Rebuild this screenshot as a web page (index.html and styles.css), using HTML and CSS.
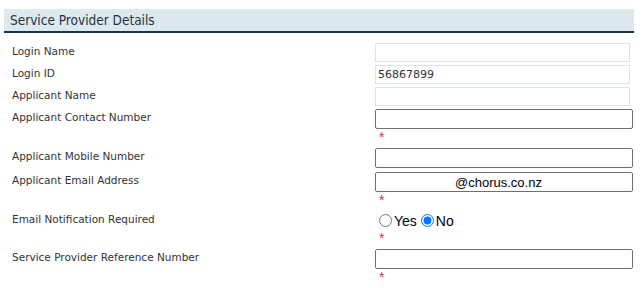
FILE: index.html
```html
<!DOCTYPE html>
<html lang="en">
<head>
    <meta charset="UTF-8">
    <meta name="viewport" content="width=device-width, initial-scale=1.0">
    <title>Service Provider Details</title>
    <link rel="stylesheet" href="styles.css">
</head>
<body>

<div class="panel">
    <h2 class="panel-title">Service Provider Details</h2>

    <form class="details-form">
        <div class="row">
            <label for="loginName">Login Name</label>
            <div class="field"><input type="text" id="loginName" class="readonly" readonly></div>
        </div>
        <div class="row">
            <label for="loginId">Login ID</label>
            <div class="field"><input type="text" id="loginId" class="readonly" value="56867899" readonly></div>
        </div>
        <div class="row">
            <label for="applicantName">Applicant Name</label>
            <div class="field"><input type="text" id="applicantName" class="readonly" readonly></div>
        </div>
        <div class="row required">
            <label for="contactNumber">Applicant Contact Number</label>
            <div class="field">
                <input type="text" id="contactNumber">
                <span class="req">*</span>
            </div>
        </div>
        <div class="row plain">
            <label for="mobileNumber">Applicant Mobile Number</label>
            <div class="field"><input type="text" id="mobileNumber"></div>
        </div>
        <div class="row required">
            <label for="email">Applicant Email Address</label>
            <div class="field">
                <input type="text" id="email" class="email-input" value="@chorus.co.nz">
                <span class="req">*</span>
            </div>
        </div>
        <div class="row required">
            <label>Email Notification Required</label>
            <div class="field">
                <div class="radios">
                    <input type="radio" name="notify" id="notifyYes"><label for="notifyYes">Yes</label>
                    <input type="radio" name="notify" id="notifyNo" checked><label for="notifyNo">No</label>
                </div>
                <span class="req">*</span>
            </div>
        </div>
        <div class="row required">
            <label for="refNumber">Service Provider Reference Number</label>
            <div class="field">
                <input type="text" id="refNumber">
                <span class="req">*</span>
            </div>
        </div>
    </form>
</div>

</body>
</html>
```

FILE: styles.css
```css
body {
    margin: 0;
    padding: 0;
    background: #ffffff;
    font-family: 'DejaVu Sans', Verdana, sans-serif;
    color: #333333;
}
.panel {
    padding: 9px 9px 0 4px;
}
.panel-title {
    margin: 0;
    height: 22px;
    line-height: 23px;
    padding-left: 6px;
    font-family: 'DejaVu Sans Condensed', 'DejaVu Sans', sans-serif;
    font-size: 13.5px;
    font-weight: normal;
    color: #1e3442;
    background: #dde9ee;
    border-bottom: 2px solid #1b3447;
}
.details-form {
    padding-top: 10px;
}
.row {
    display: grid;
    grid-template-columns: 363px 258px;
    padding-left: 8px;
    padding-bottom: 3px;
}
.row > label {
    font-size: 10.5px;
    line-height: 14px;
    padding-top: 1px;
}
.row.required {
    padding-bottom: 7px;
}
.row.plain {
    padding-bottom: 4px;
}
.field input[type="text"] {
    display: block;
    box-sizing: border-box;
    width: 258px;
    height: 20px;
    margin: 0;
    padding: 0 3px;
    border: 1px solid #707070;
    border-radius: 2px;
    font-family: 'Liberation Sans', Arial, sans-serif;
    font-size: 13px;
    color: #000000;
}
.field input.readonly {
    width: 255px;
    height: 19px;
    border: 1px solid #d9e7ed;
    border-radius: 0;
    padding: 0 2px;
    font-family: 'DejaVu Sans', Verdana, sans-serif;
    font-size: 11px;
    color: #333333;
}
.field input.email-input {
    padding-left: 79px;
}
.req {
    display: block;
    height: 12px;
    line-height: 16px;
    padding-left: 4px;
    font-family: 'Liberation Sans', Arial, sans-serif;
    font-size: 14px;
    color: #e5303a;
}
.radios {
    display: flex;
    align-items: center;
    height: 19px;
    padding-left: 4px;
    font-family: 'Liberation Sans', Arial, sans-serif;
    font-size: 14px;
    color: #000000;
}
.radios input {
    margin: 0 2px 0 0;
    width: 13px;
    height: 13px;
}
.radios label {
    margin-right: 4px;
}
```
